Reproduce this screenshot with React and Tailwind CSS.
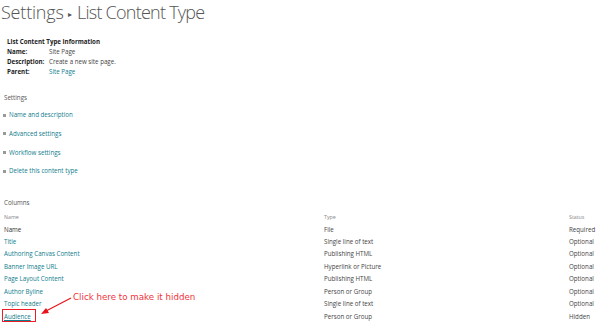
import React from "react";

const rows = [
  ["Name", "File", "Required", false],
  ["Title", "Single line of text", "Optional", true],
  ["Authoring Canvas Content", "Publishing HTML", "Optional", true],
  ["Banner Image URL", "Hyperlink or Picture", "Optional", true],
  ["Page Layout Content", "Publishing HTML", "Optional", true],
  ["Author Byline", "Person or Group", "Optional", true],
  ["Topic header", "Single line of text", "Optional", true],
  ["Audience", "Person or Group", "Hidden", true],
];

const links = [
  "Name and description",
  "Advanced settings",
  "Workflow settings",
  "Delete this content type",
];

export default function App() {
  return (
    <div className="relative w-[605px] h-[323px] overflow-hidden bg-white font-['Open_Sans',sans-serif] text-[#444]">
      <h1 className="pl-[1px] text-[18px] leading-[24px] font-light text-[#555]">
        <span className="tracking-[-0.2px]">Settings</span>{" "}
        <span className="text-[8px] align-middle">▸</span>{" "}
        <span className="tracking-[-0.75px]">List Content Type</span>
      </h1>

      <div className="pl-[7px] pt-[11px] text-[6.2px] leading-[10px]">
        <div className="font-bold text-[#222]">List Content Type Information</div>
        <div className="flex">
          <div className="w-[42px] font-bold text-[#222]">Name:</div>
          <div>Site Page</div>
        </div>
        <div className="flex">
          <div className="w-[42px] font-bold text-[#222]">Description:</div>
          <div>Create a new site page.</div>
        </div>
        <div className="flex">
          <div className="w-[42px] font-bold text-[#222]">Parent:</div>
          <div className="text-[#0f7c8c]">Site Page</div>
        </div>
      </div>

      <div className="pl-[4px] pt-[16px] text-[6.2px] leading-[10px] text-[#555]">Settings</div>

      <div className="pl-[3px] pt-[7px] flex flex-col gap-[8.7px] text-[6.2px] leading-[10px]">
        {links.map((l) => (
          <div key={l} className="flex items-center">
            <span className="w-[3px] h-[3px] bg-[#999] mr-[3px]" />
            <span className="text-[#0f7c8c]">{l}</span>
          </div>
        ))}
      </div>

      <div className="pl-[4px] pt-[22px] text-[6.2px] leading-[10px] text-[#555]">Columns</div>

      <div className="pt-[3px] text-[6.2px] leading-[12.4px]">
        <div className="flex text-[5.3px] text-[#888]">
          <div className="w-[324px] pl-[4px]">Name</div>
          <div className="w-[245px]">Type</div>
          <div>Status</div>
        </div>
        {rows.map(([n, t, s, link]) => (
          <div key={n} className="flex">
            <div className="w-[324px] pl-[4px]">
              <span className={link ? "text-[#0f7c8c]" + (n === "Audience" ? " underline" : "") : "text-[#333]"}>{n}</span>
            </div>
            <div className="w-[245px] text-[#444]">{t}</div>
            <div className="text-[#444]">{s}</div>
          </div>
        ))}
      </div>

      <div className="absolute left-[2px] top-[309px] w-[34px] h-[13px] border border-[#ee1c25]" />
      <div className="absolute left-[73px] top-[291px] text-[8.7px] leading-[12px] font-['DejaVu_Sans',sans-serif] text-[#f0323a]">
        Click here to make it hidden
      </div>
      <svg className="absolute left-0 top-0" width="605" height="323">
        <line x1="71" y1="298" x2="46" y2="311" stroke="#e8121b" strokeWidth="1.2" />
        <polygon points="41,314 46,308 49,313" fill="#e8121b" />
      </svg>
    </div>
  );
}
